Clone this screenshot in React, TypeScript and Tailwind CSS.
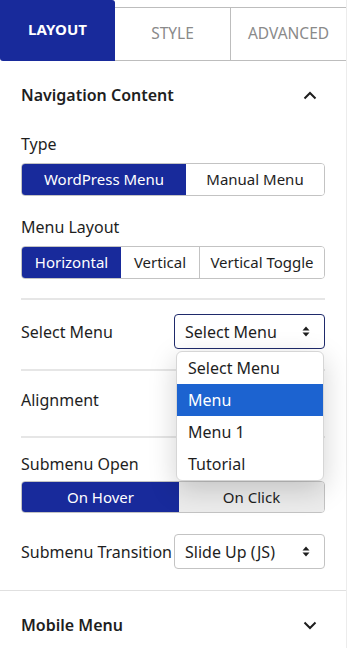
import React from "react";

const BLUE = "bg-[#182a9b]";

function ChevronUp() {
  return (
    <svg width="14" height="9" viewBox="0 0 14 9" fill="none">
      <path d="M1.5 7.5L7 2l5.5 5.5" stroke="#1e1e1e" strokeWidth="2" />
    </svg>
  );
}

function ChevronDown() {
  return (
    <svg width="14" height="9" viewBox="0 0 14 9" fill="none">
      <path d="M1.5 1.5L7 7l5.5-5.5" stroke="#1e1e1e" strokeWidth="2" />
    </svg>
  );
}

function UpDown() {
  return (
    <svg width="8" height="11" viewBox="0 0 8 11">
      <path d="M4 0.5L7.5 4.5H0.5Z M4 10.5L0.5 6.5H7.5Z" fill="#1e1e1e" />
    </svg>
  );
}

function Segmented({ items, widths, active, h = "h-[33px]", last }: { items: string[]; widths: string[]; active: number; h?: string; last?: string }) {
  return (
    <div className={`flex ${h} rounded-[4px] border border-[#c3c3c3] overflow-hidden`}>
      {items.map((it, i) => (
        <div
          key={it}
          className={`${widths[i]} flex items-center justify-center text-[15px] ${
            i === active ? `${BLUE} text-white` : `${i === items.length - 1 && last ? last : "bg-white"} text-[#1e1e1e]`
          } ${i > 0 && i !== active && i - 1 !== active ? "border-l border-[#c3c3c3]" : ""}`}
        >
          {it}
        </div>
      ))}
    </div>
  );
}

export default function App() {
  return (
    <div className="w-[347px] min-h-[648px] bg-white border-r border-[#ececec] text-[#1e1e1e]" style={{ fontFamily: '"Noto Sans", sans-serif' }}>
      {/* Tabs */}
      <div className="flex h-[61px]">
        <div className={`w-[115px] ${BLUE} rounded-bl-[3px] rounded-tr-[3px] flex items-center justify-center pb-[2px] text-white font-bold text-[15px]`}>
          LAYOUT
        </div>
        <div className="w-[116px] mt-[7px] border-t border-b border-r border-[#bdbdbd] flex items-center justify-center text-[15.5px] text-[#8a8a8a]">
          STYLE
        </div>
        <div className="flex-1 mt-[7px] border-t border-b border-[#bdbdbd] flex items-center justify-center text-[15.5px] text-[#8a8a8a]">
          ADVANCED
        </div>
      </div>

      {/* Navigation Content header */}
      <div className="h-[68px] px-[21px] flex items-center justify-between">
        <span className="text-[16px] font-semibold">Navigation Content</span>
        <span className="mr-[8px]"><ChevronUp /></span>
      </div>

      <div className="px-[21px]">
        <div className="mt-[5px] h-[20px] leading-[20px] text-[16px]">Type</div>
        <div className="mt-[9px]">
          <Segmented items={["WordPress Menu", "Manual Menu"]} widths={["w-[164px]", "flex-1"]} active={0} />
        </div>

        <div className="mt-[21px] h-[20px] leading-[20px] text-[16px]">Menu Layout</div>
        <div className="mt-[9px]">
          <Segmented items={["Horizontal", "Vertical", "Vertical Toggle"]} widths={["w-[99px]", "w-[78px]", "flex-1"]} active={0} />
        </div>

        <div className="mt-[19px] h-[2px] bg-[#e6e6e6]" />

        {/* Select Menu */}
        <div className="mt-[14px] h-[35px] flex items-center justify-between relative">
          <span className="text-[16px]">Select Menu</span>
          <div className="w-[151px] h-[35px] rounded-[4px] border border-[#1f2a6b] flex items-center justify-between pl-[10px] pr-[14px] text-[16px]">
            <span>Select Menu</span>
            <UpDown />
          </div>
          <div className="absolute z-10 top-full mt-[2px] right-[1px] w-[148px] rounded-[6px] bg-white border border-[#d6d6d6] overflow-hidden shadow-[0_8px_28px_rgba(0,0,0,0.18)] text-[16px]">
            <div className="h-[32px] px-[11px] flex items-center">Select Menu</div>
            <div className="h-[32px] px-[11px] flex items-center bg-[#1c63d0] text-white">Menu</div>
            <div className="h-[32px] px-[11px] flex items-center">Menu 1</div>
            <div className="h-[32px] px-[11px] flex items-center">Tutorial</div>
          </div>
        </div>

        <div className="mt-[20px] h-[2px] bg-[#e6e6e6]" />
        <div className="mt-[19px] h-[20px] leading-[20px] text-[16px]">Alignment</div>
        <div className="mt-[26px] h-[2px] bg-[#e6e6e6]" />

        <div className="mt-[16px] h-[20px] leading-[20px] text-[16px]">Submenu Open</div>
        <div className="mt-[7px]">
          <Segmented items={["On Hover", "On Click"]} widths={["w-[157px]", "flex-1"]} active={0} h="h-[32px]" last="bg-[#ececec]" />
        </div>

        <div className="mt-[21px] h-[35px] flex items-center justify-between">
          <span className="text-[16px]">Submenu Transition</span>
          <div className="w-[151px] h-[35px] rounded-[4px] border border-[#c3c3c3] flex items-center justify-between pl-[10px] pr-[14px] text-[16px]">
            <span>Slide Up (JS)</span>
            <UpDown />
          </div>
        </div>
      </div>

      <div className="mt-[21px] h-px bg-[#e0e0e0]" />

      <div className="h-[68px] px-[21px] flex items-center justify-between">
        <span className="text-[16px] font-semibold">Mobile Menu</span>
        <span className="mr-[8px]"><ChevronDown /></span>
      </div>
    </div>
  );
}
